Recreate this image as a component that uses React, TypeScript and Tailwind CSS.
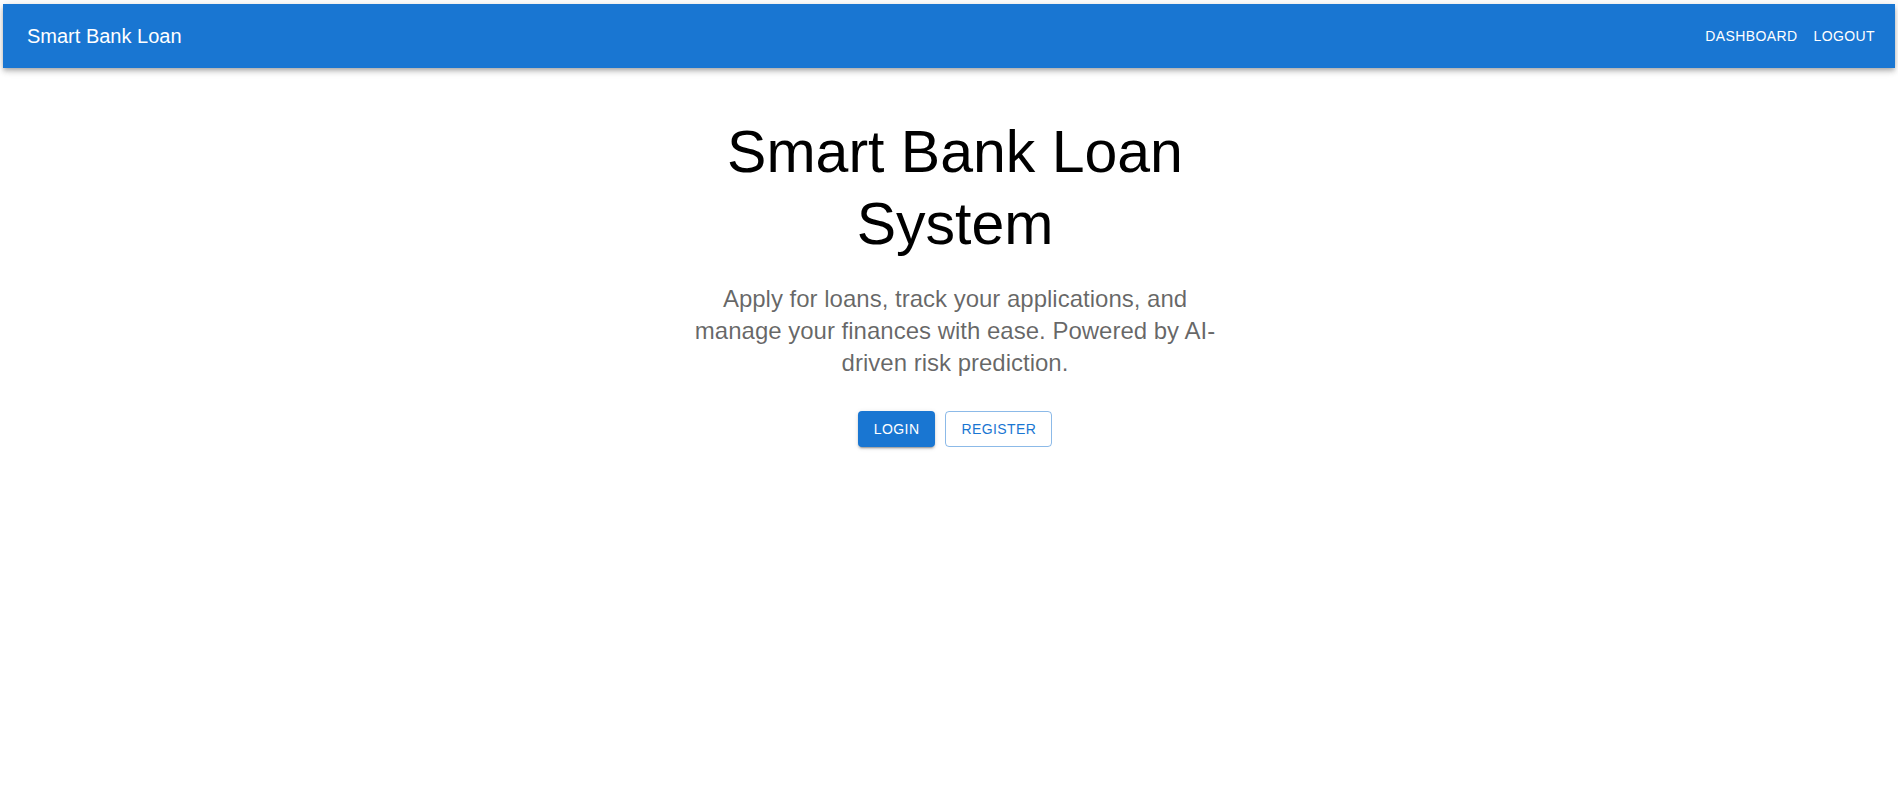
export default function App() {
  return (
    <div className="min-h-screen bg-white px-[3px] pt-[4px] font-['Liberation_Sans',Arial,sans-serif]">
      <header className="flex h-16 items-center justify-between bg-[#1976d2] pl-6 pr-[12px] text-white shadow-[0_2px_4px_-1px_rgba(0,0,0,0.2),0_4px_5px_0_rgba(0,0,0,0.14),0_1px_10px_0_rgba(0,0,0,0.12)]">
        <div className="text-[20px] leading-8">Smart Bank Loan</div>
        <nav className="flex items-center">
          <button className="px-2 py-1.5 text-[14px] uppercase leading-6 tracking-[0.4px]">Dashboard</button>
          <button className="px-2 py-1.5 text-[14px] uppercase leading-6 tracking-[0.4px]">Logout</button>
        </nav>
      </header>

      <main className="flex flex-col items-center pl-[12px] pt-12">
        <h1 className="w-[520px] text-center text-[59px] leading-[72px] text-black">Smart Bank Loan System</h1>
        <p className="mt-[23px] w-[552px] text-center text-[24px] leading-8 text-black/60">
          Apply for loans, track your applications, and manage your finances with ease. Powered by AI-driven risk prediction.
        </p>
        <div className="mt-8 flex gap-[10px]">
          <button className="min-w-16 rounded bg-[#1976d2] px-4 py-1.5 text-[14px] uppercase leading-6 tracking-[0.4px] text-white shadow-[0_3px_1px_-2px_rgba(0,0,0,0.2),0_2px_2px_0_rgba(0,0,0,0.14),0_1px_5px_0_rgba(0,0,0,0.12)]">
            Login
          </button>
          <button className="min-w-16 rounded border border-[#1976d2]/50 px-[15px] py-[5px] text-[14px] uppercase leading-6 tracking-[0.4px] text-[#1976d2]">
            Register
          </button>
        </div>
      </main>
    </div>
  );
}
